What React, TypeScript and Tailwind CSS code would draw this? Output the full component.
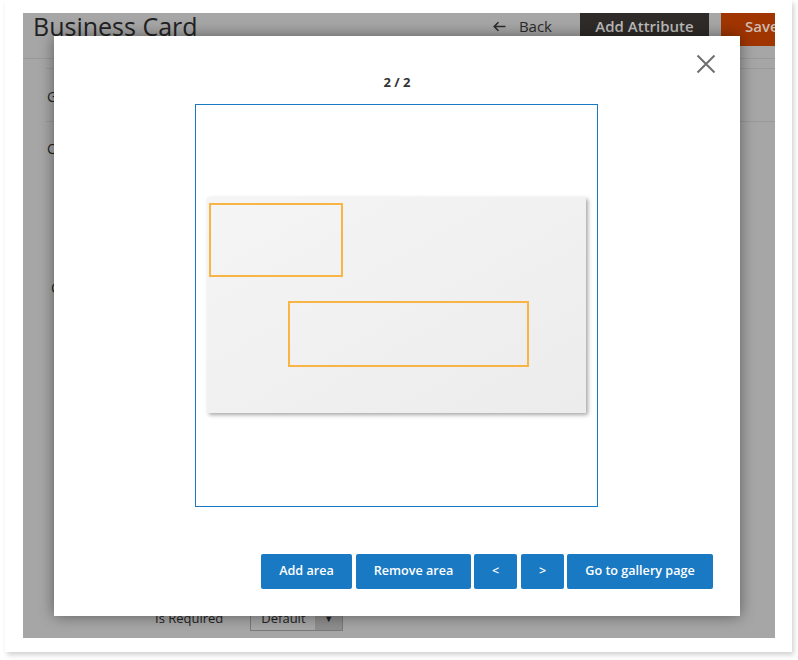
import React from 'react';

const font = { fontFamily: '"Open Sans", "Liberation Sans", sans-serif' };

function BackArrow() {
  return (
    <svg width="13" height="11" viewBox="0 0 13 11" fill="none" stroke="#2b2b2b" strokeWidth="1.6">
      <path d="M12.5 5.5H1.5M5.5 1.2L1.2 5.5l4.3 4.3" />
    </svg>
  );
}

function CloseIcon() {
  return (
    <svg width="20" height="20" viewBox="0 0 20 20" fill="none" stroke="#6f6f6f" strokeWidth="2">
      <path d="M1.5 1.5l17 17M18.5 1.5l-17 17" />
    </svg>
  );
}

function CardPreview() {
  return (
    <div className="relative ml-[11px] mt-[92px] h-[216px] w-[379px] bg-gradient-to-br from-[#f5f5f5] to-[#ececec] shadow-[2px_2px_4px_rgba(0,0,0,0.35)]">
      {/* selected areas */}
      <div className="absolute left-[2px] top-[6px] h-[74px] w-[134px] border-2 border-[#f9b446]" />
      <div className="absolute left-[81px] top-[104px] h-[66px] w-[241px] border-2 border-[#f9b446]" />
    </div>
  );
}

const btn =
  'h-[35px] rounded-[2px] bg-[#1979c3] text-[12.6px] font-semibold text-white flex items-center justify-center';

export default function App() {
  return (
    <div className="min-h-[660px] w-[798px] bg-white pl-[5px]" style={font}>
      <div className="h-[652px] w-[787px] bg-white pl-[18px] pt-[13px] shadow-[2px_3px_5px_rgba(0,0,0,0.18)]">
        {/* dimmed admin page */}
        <div className="relative h-[625px] w-[752px] overflow-hidden bg-[#a6a6a6]">
          <div className="flex h-[46px] items-start border-b border-[#999999]">
            <div className="pl-[10px] text-[25px] leading-[26px] text-[#222222]">Business Card</div>
            <div className="ml-auto flex items-start">
              <div className="flex items-center gap-[13px] pr-[28px] pt-[2px] text-[15px] leading-[22px] text-[#2b2b2b]">
                <BackArrow />
                <span>Back</span>
              </div>
              <div className="flex h-[33px] w-[129px] justify-center bg-[#2f2b28] pt-[2px] text-[15px] font-semibold leading-[22px] text-[#bdbdbd]">
                Add Attribute
              </div>
              <div className="ml-[12px] h-[33px] w-[54px] bg-[#a13500] pl-[24px] pt-[2px] text-[15px] font-semibold leading-[22px] text-[#cdbdb5]">
                Save
              </div>
            </div>
          </div>
          <div className="ml-[23px] mt-[9px] border-t border-[#999999]" />
          <div className="ml-[24px] mt-[17px] text-[14px] text-[#222222]">G</div>
          <div className="ml-[23px] mt-[14px] border-t border-[#999999]" />
          <div className="ml-[24px] mt-[16px] text-[14px] text-[#222222]">C</div>
          <div className="ml-[28px] mt-[118px] text-[14px] text-[#222222]">C</div>
          <div className="absolute left-[132px] top-[593px] flex items-center gap-[27px] text-[13px] text-[#222222]">
            <span>Is Required</span>
            <div className="flex h-[25px] w-[93px] border border-[#7a7a7a] text-[#222222]">
              <span className="flex-1 pl-[10px] leading-[22px]">Default</span>
              <span className="flex w-[27px] items-center justify-center bg-[#8e8e8e] text-[9px] text-[#222]">▼</span>
            </div>
          </div>

          {/* modal */}
          <div className="absolute left-[31px] top-[23px] flex h-[580px] w-[686px] flex-col bg-white shadow-[0_0_14px_rgba(0,0,0,0.45)]">
            <div className="absolute right-[24px] top-[18px]">
              <CloseIcon />
            </div>
            <div className="pt-[37px] text-center text-[13px] font-bold leading-[18px] text-[#333333]">2 / 2</div>
            <div className="ml-[141px] mt-[13px] h-[403px] w-[403px] border border-[#1979c3]">
              <CardPreview />
            </div>
            <div className="mt-[47px] flex justify-end gap-[3px] pr-[27px]">
              <div className={`${btn} w-[91px]`}>Add area</div>
              <div className={`${btn} ml-[1px] w-[115px]`}>Remove area</div>
              <div className={`${btn} w-[43px]`}>&lt;</div>
              <div className={`${btn} ml-[1px] w-[43px]`}>&gt;</div>
              <div className={`${btn} w-[146px]`}>Go to gallery page</div>
            </div>
          </div>
        </div>
      </div>
    </div>
  );
}
